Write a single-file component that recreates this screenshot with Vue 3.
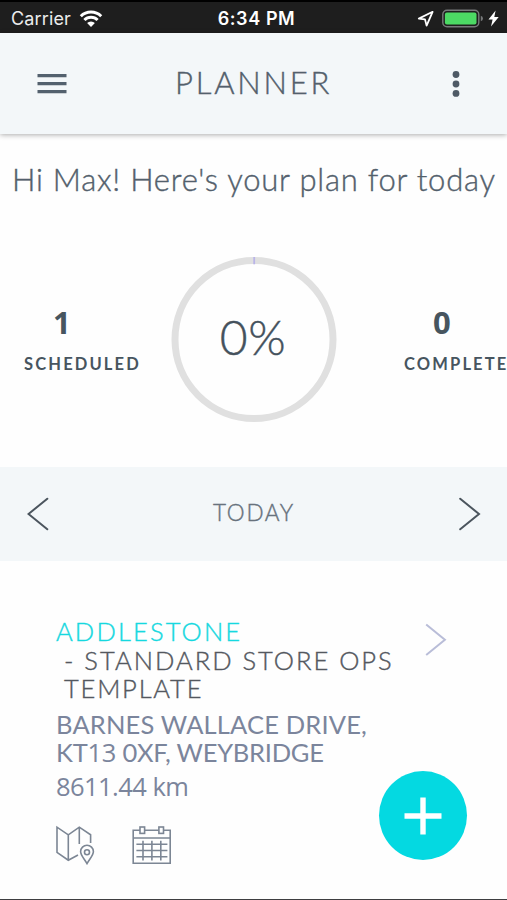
<script setup>
const stats = {
  scheduled: { value: 1, label: 'SCHEDULED' },
  completed: { value: 0, label: 'COMPLETE' },
}
const progress = 0
</script>

<template>
  <main class="screen">
    <div class="status">
      <div class="status-left">
        <span class="carrier">Carrier</span>
        <svg class="wifi" width="24" height="18" viewBox="0 0 24 18">
          <path d="M1.8 6.2 A14.5 14.5 0 0 1 22.2 6.2" />
          <path d="M5.4 10 A9.3 9.3 0 0 1 18.6 10" />
          <path class="solid" d="M12 17 L8.1 13 A5.6 5.6 0 0 1 15.9 13 Z" />
        </svg>
      </div>
      <span class="clock">6:34 PM</span>
      <div class="status-right">
        <svg width="17" height="18" viewBox="0 0 17 18">
          <path d="M15.6 1.8 L1.8 8.6 L8 9.4 L9.6 15.6 Z" fill="none" stroke="#fff" stroke-width="1.8" stroke-linejoin="round" />
        </svg>
        <svg class="battery" width="42" height="20" viewBox="0 0 42 20">
          <rect x=".8" y="1.3" width="36" height="16.4" rx="4.2" fill="none" stroke="#77797a" stroke-width="1.4" />
          <rect x="2.9" y="3.4" width="31.6" height="12.2" rx="2" fill="#4cd964" />
          <path d="M38.8 6.8 Q41 7.5 41 9.5 Q41 11.5 38.8 12.2 Z" fill="#77797a" />
        </svg>
        <svg class="bolt" width="11" height="17" viewBox="0 0 11 17">
          <path d="M7.6 .4 L.5 9.6 H4.6 L3 16.6 L10.7 6.9 H6.3 Z" fill="#fff" />
        </svg>
      </div>
    </div>

    <header class="header">
      <svg class="menu" width="30" height="22" viewBox="0 0 30 22">
        <path d="M.5 2.7 H29.5 M.5 10.7 H29.5 M.5 18.7 H29.5" stroke="#53616e" stroke-width="3.2" />
      </svg>
      <h1 class="title light">PLANNER</h1>
      <svg class="more" width="8" height="28" viewBox="0 0 8 28">
        <circle cx="4" cy="4.5" r="3.4" /><circle cx="4" cy="14" r="3.4" /><circle cx="4" cy="23.4" r="3.4" />
      </svg>
    </header>

    <p class="greeting light">Hi Max! Here's your plan for today</p>

    <section class="stats">
      <div class="stat scheduled">
        <span class="value">{{ stats.scheduled.value }}</span>
        <span class="label">{{ stats.scheduled.label }}</span>
      </div>
      <div class="ring">
        <svg width="166" height="166" viewBox="0 0 166 166">
          <circle cx="83" cy="83.5" r="79" fill="none" stroke="#e0e0e0" stroke-width="7" />
          <path d="M83.2 1 V8.3" stroke="#b9b4e8" stroke-width="1.8" />
        </svg>
        <span class="percent light">{{ progress }}%</span>
      </div>
      <div class="stat completed">
        <span class="value">{{ stats.completed.value }}</span>
        <span class="label">{{ stats.completed.label }}</span>
      </div>
    </section>

    <nav class="day">
      <svg width="22" height="34" viewBox="0 0 22 34"><path d="M20.3 1.7 L1.5 17 L20.3 32.3" /></svg>
      <span class="day-name light">TODAY</span>
      <svg width="22" height="34" viewBox="0 0 22 34"><path d="M1.2 1.7 L20 17 L1.2 32.3" /></svg>
    </nav>

    <article class="visit">
      <div class="visit-head">
        <div>
          <div class="store light">ADDLESTONE</div>
          <div class="template light">- STANDARD STORE OPS<br><span class="t2">TEMPLATE</span></div>
        </div>
        <svg class="go" width="22" height="34" viewBox="0 0 22 34"><path d="M1.2 1.5 L19.9 16.8 L1.2 32.1" /></svg>
      </div>
      <div class="address">BARNES WALLACE DRIVE,<br><span class="a2">KT<span class="num">13</span> 0XF, WEYBRIDGE</span></div>
      <div class="distance">8611.44 km</div>
      <div class="tools">
        <svg width="40" height="40" viewBox="0 0 40 40">
          <path d="M22 30 L12.3 35.2 L1 27.3 V2.2 L12.3 9.8 L23.3 2.2 L34.6 9.8 V18 M12.3 9.8 V35.2 M23.3 2.2 V19" />
          <path d="M31 38.6 C28 33.5 24.6 30.2 24.6 26.6 A6.4 6.4 0 0 1 37.4 26.6 C37.4 30.2 34 33.5 31 38.6 Z" />
          <circle cx="31" cy="27.2" r="2.5" />
        </svg>
        <svg width="40" height="40" viewBox="0 0 40 40">
          <path d="M8 5.2 H1.2 V38.2 H38.2 V5.2 H31.6 M12.6 5.2 H26.8 M1.2 13 H38.2" />
          <rect x="8" y="2" width="4.6" height="6.4" /><rect x="26.9" y="2" width="4.6" height="6.4" />
          <path d="M4.4 19.3 H35.4 M4.4 25.5 H35.4 M4.4 31.8 H35.4 M11 15.8 V35.5 M19.9 15.8 V35.5 M28.8 15.8 V35.5" />
        </svg>
      </div>
    </article>

    <button class="add" aria-label="Add">
      <svg width="38" height="38" viewBox="0 0 38 38"><path d="M.5 19 H37.5 M19 .5 V37.5" stroke="#fff" stroke-width="5.4" /></svg>
    </button>
  </main>
</template>

<style>
body {
  background: #fefefe;
}
</style>

<style scoped>
.screen {
  position: relative;
  box-sizing: border-box;
  width: 507px;
  height: 900px;
  overflow: hidden;
  border-bottom: 1px solid #3e3e40;
  background: #fefefe;
  color: #53606c;
  font-family: Lato, "Open Sans", sans-serif;
}
svg {
  display: block;
  flex: none;
}
.light {
  font-weight: 300;
  -webkit-text-stroke: .4px currentColor;
}
.status {
  box-sizing: border-box;
  display: grid;
  grid-template-columns: 1fr auto 1fr;
  align-items: center;
  height: 33px;
  padding: 2px 8px 0 11px;
  border-top: 2px solid #000;
  background: #1e1e1e;
  color: #fff;
  font: 18px/28px Inter, sans-serif;
}
.status-left,
.status-right {
  display: flex;
  align-items: center;
}
.status-left {
  gap: 7px;
}
.carrier {
  width: 61px;
  white-space: nowrap;
  color: #ececec;
  letter-spacing: .15px;
}
.wifi {
  fill: none;
  stroke: #fff;
  stroke-width: 3;
}
.wifi .solid {
  fill: #fff;
  stroke: none;
}
.clock {
  padding-left: 3px;
  font-weight: 600;
  letter-spacing: .6px;
}
.status-right {
  justify-content: flex-end;
}
.battery {
  margin-left: 8px;
}
.bolt {
  margin-left: 4px;
}
.header {
  position: relative;
  box-sizing: border-box;
  display: flex;
  align-items: center;
  justify-content: space-between;
  height: 101px;
  padding: 0 47px 0 37px;
  background: #f3f7f9;
  box-shadow: 0 1px 5px rgba(0, 0, 0, .32);
}
.title {
  margin: 0;
  padding: 0 12px 4px 0;
  font-size: 31px;
  line-height: 40px;
  letter-spacing: 2.8px;
}
.more {
  fill: #4e5a66;
}
.greeting {
  margin: 25px 0 0 12px;
  font-size: 31px;
  line-height: 40px;
  letter-spacing: .78px;
  white-space: nowrap;
}
.stats {
  display: grid;
  grid-template-columns: 171px 166px 170px;
  height: 166px;
  margin-top: 57px;
}
.stat {
  display: flex;
  flex-direction: column;
  padding-top: 47px;
  color: #47555f;
}
.value {
  font-family: "Open Sans", sans-serif;
  font-size: 31px;
  font-weight: 700;
  line-height: 38px;
}
.label {
  margin-top: 13px;
  font-size: 16.5px;
  font-weight: 700;
  line-height: 20px;
  letter-spacing: 2.15px;
}
.scheduled {
  padding-left: 24px;
}
.scheduled .value {
  padding-left: 29px;
}
.completed {
  padding-left: 67px;
}
.completed .value {
  padding-left: 29px;
}
.ring {
  display: grid;
  place-items: center;
}
.ring > * {
  grid-area: 1 / 1;
}
.percent {
  padding: 0 2px 5px 0;
  color: #44515c;
  font-size: 48px;
  line-height: 60px;
  letter-spacing: .5px;
}
.day {
  box-sizing: border-box;
  display: flex;
  align-items: center;
  justify-content: space-between;
  height: 94px;
  margin-top: 45px;
  padding: 0 26px 0 27px;
  background: #f3f7f9;
}
.day svg {
  fill: none;
  stroke: #4b555e;
  stroke-width: 2;
  stroke-linecap: round;
}
.day-name {
  padding-bottom: 3px;
  color: #68727d;
  font-size: 22.5px;
  line-height: 30px;
  letter-spacing: 1.7px;
}
.visit {
  padding: 56px 60px 0 56px;
  font-size: 25.5px;
  line-height: 28.5px;
  white-space: nowrap;
}
.visit-head {
  display: flex;
  justify-content: space-between;
}
.store {
  color: #16d8df;
  letter-spacing: 2.15px;
}
.template {
  padding-left: 8px;
  color: #54585f;
  letter-spacing: 2px;
}
.t2 {
  letter-spacing: 1.8px;
}
.go {
  margin-top: 6px;
  fill: none;
  stroke: #b9bdd8;
  stroke-width: 2;
}
.address {
  margin-top: 7px;
  color: #7b859c;
  letter-spacing: .15px;
}
.a2 {
  letter-spacing: -.25px;
}
.num {
  font-family: "Open Sans", sans-serif;
  line-height: 1;
}
.distance {
  margin-top: 5px;
  color: #7b859c;
  font-family: "Open Sans", sans-serif;
  letter-spacing: -.55px;
}
.tools {
  display: flex;
  gap: 36px;
  margin-top: 25px;
}
.tools svg {
  fill: none;
  stroke: #7c8694;
  stroke-width: 1.6;
}
.add {
  position: absolute;
  top: 771px;
  left: 379px;
  display: grid;
  place-items: center;
  width: 88px;
  height: 89px;
  padding: 0;
  border: 0;
  border-radius: 50%;
  background: #04d9e1;
}
</style>
